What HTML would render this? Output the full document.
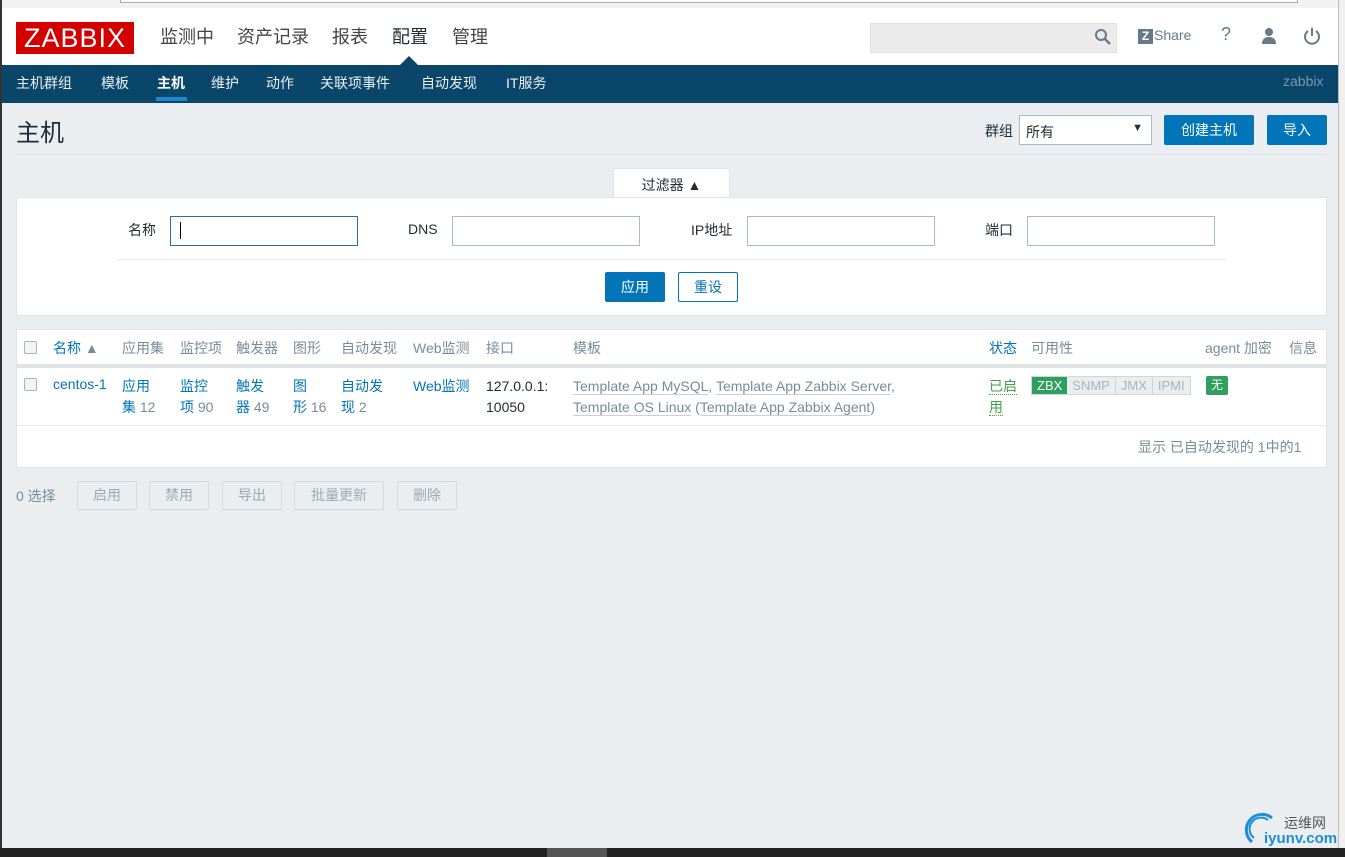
<!DOCTYPE html>
<html><head><meta charset="utf-8"><style>
*{margin:0;padding:0;box-sizing:border-box}
body{width:1345px;height:857px;overflow:hidden;background:#fff;font-family:"Liberation Sans","Noto Sans CJK SC",sans-serif;font-size:14px;color:#1f2c33;position:relative}
.a{position:absolute;white-space:nowrap}
#win{position:absolute;left:2px;top:0;width:1336px;height:848px;background:#ebeef0;overflow:hidden}
.hdr{position:absolute;left:0;top:8px;width:100%;height:57px;background:#fff}
.nav{position:absolute;left:0;top:65px;width:100%;height:38px;background:#0a466a}
.nav span{position:absolute;top:8px;color:#fff;font-size:14px;opacity:.92}
.top span{position:absolute;top:15px;font-size:18px;color:#444}
.box{position:absolute;background:#fff;border:1px solid #dfe4e7}
input{position:absolute;height:30px;border:1px solid #acbbc2;background:#fff}
.btn{position:absolute;height:30px;border-radius:2px;background:#0275b8;color:#fff;font-size:14px;text-align:center;line-height:30px}
.dis{position:absolute;top:481px;height:29px;border:1px solid #d5dadd;background:#ebeef0;color:#a0a9ae;border-radius:2px;text-align:center;line-height:27px}
.th{position:absolute;top:338px;color:#768d99}
.lk{color:#0275b8}
.tp{color:#768d99;border-bottom:1px solid #c8d1d6}
.cb{position:absolute;width:13px;height:13px;border:1px solid #aab3b8;border-radius:2px;background:#f4f4f4}
</style></head><body>
<div style="position:absolute;left:0;top:0;width:2px;height:848px;background:#333"></div>
<div style="position:absolute;left:0;top:848px;width:1345px;height:9px;background:#222"></div>
<div style="position:absolute;left:547px;top:848px;width:60px;height:9px;background:#555"></div>
<div style="position:absolute;left:1338px;top:0;width:7px;height:848px;background:#f0f0f0;border-left:1px solid #bbb"></div>
<div id="win">
<div style="position:absolute;left:0;top:0;width:100%;height:8px;background:#f2f2f2"></div>
<div style="position:absolute;left:118px;top:0;width:1178px;height:3px;border:1px solid #aaa;border-top:none;background:#fff"></div>
<div class="hdr top">
<div class="a" style="left:14px;top:14px;width:118px;height:32px;background:#d40000;color:#fff;font-size:27px;line-height:32px;text-align:center;letter-spacing:1px">ZABBIX</div>
<span style="left:158px">监测中</span><span style="left:235px">资产记录</span><span style="left:330px">报表</span><span style="left:390px;color:#1f2c33">配置</span><span style="left:450px">管理</span>
<div class="a" style="left:398px;top:48px;width:0;height:0;border:9px solid transparent;border-bottom-color:#0a466a;border-top:none"></div>
<div class="a" style="left:868px;top:15px;width:247px;height:30px;background:#ebebeb;border:1px solid #e0e0e0"></div>
<svg class="a" style="left:1092px;top:20px" width="18" height="18" viewBox="0 0 18 18"><circle cx="7" cy="7" r="5" fill="none" stroke="#687a85" stroke-width="2"/><path d="M11 11l5 5" stroke="#687a85" stroke-width="2.5"/></svg>
<div class="a" style="left:1136px;top:21px;width:15px;height:15px;background:#687a85;color:#fff;font-size:12px;font-weight:bold;text-align:center;line-height:15px">Z</div>
<span style="left:1152px;top:19px;font-size:14px;color:#687a85">Share</span>
<span style="left:1219px;top:16px;font-size:18px;color:#687a85">?</span>
<svg class="a" style="left:1258px;top:19px" width="18" height="18" viewBox="0 0 18 18"><circle cx="9" cy="5" r="4" fill="#687a85"/><path d="M2 17c0-5 3-7 7-7s7 2 7 7z" fill="#687a85"/></svg>
<svg class="a" style="left:1301px;top:19px" width="18" height="18" viewBox="0 0 18 18"><path d="M5 4a7 7 0 1 0 8 0" fill="none" stroke="#687a85" stroke-width="2"/><path d="M9 1v8" stroke="#687a85" stroke-width="2"/></svg>
</div>
<div class="nav">
<span style="left:14px">主机群组</span><span style="left:99px">模板</span><span style="left:155px;font-weight:bold;opacity:1">主机</span><span style="left:209px">维护</span><span style="left:264px">动作</span><span style="left:318px">关联项事件</span><span style="left:419px">自动发现</span><span style="left:504px">IT服务</span>
<div class="a" style="left:154px;top:32px;width:31px;height:4px;background:#1e87d0"></div>
<span style="left:1281px;color:#7a99ad;opacity:1">zabbix</span>
</div>
<div class="a" style="left:14px;top:113px;font-size:24px;color:#1f2c33">主机</div>
<div class="a" style="left:14px;top:154px;width:1311px;height:1px;background:#dde2e5"></div>
<div class="a" style="left:983px;top:121px;font-size:14px">群组</div>
<div class="a" style="left:1017px;top:115px;width:133px;height:30px;background:#fff;border:1px solid #acbbc2;padding:6px 0 0 6px">所有<span style="position:absolute;right:8px;top:6px;font-size:11px">▼</span></div>
<div class="btn" style="left:1162px;top:115px;width:90px">创建主机</div>
<div class="btn" style="left:1265px;top:115px;width:60px">导入</div>
<div class="a" style="left:611px;top:168px;width:117px;height:31px;background:#fff;border:1px solid #dfe4e7;border-bottom:none;text-align:center;padding-top:6px">过滤器 ▲</div>
<div class="box" style="left:14px;top:197px;width:1311px;height:119px"></div>
<div class="a" style="left:126px;top:220px">名称</div>
<input style="left:168px;top:216px;width:188px;border-color:#2c6e9b">
<div class="a" style="left:178px;top:222px;width:1px;height:17px;background:#000"></div>
<div class="a" style="left:406px;top:221px">DNS</div>
<input style="left:450px;top:216px;width:188px">
<div class="a" style="left:689px;top:220px">IP地址</div>
<input style="left:745px;top:216px;width:188px">
<div class="a" style="left:983px;top:220px">端口</div>
<input style="left:1025px;top:216px;width:188px">
<div class="a" style="left:114px;top:259px;width:1111px;height:1px;background:#e6eaec"></div>
<div class="btn" style="left:603px;top:272px;width:60px">应用</div>
<div class="btn" style="left:676px;top:272px;width:60px;background:#fff;color:#0275b8;border:1px solid #0275b8;line-height:28px">重设</div>
<div class="box" style="left:14px;top:329px;width:1311px;height:139px"></div>
<div class="a" style="left:15px;top:364px;width:1309px;height:4px;background:#dfe4e7"></div>
<div class="a" style="left:15px;top:425px;width:1309px;height:1px;background:#e6eaec"></div>
<div class="cb" style="left:22px;top:341px"></div>
<div class="th lk" style="left:51px">名称 <span style="color:#768d99">▲</span></div>
<div class="th" style="left:120px">应用集</div><div class="th" style="left:178px">监控项</div><div class="th" style="left:234px">触发器</div><div class="th" style="left:291px">图形</div><div class="th" style="left:339px">自动发现</div><div class="th" style="left:411px">Web监测</div><div class="th" style="left:484px">接口</div><div class="th" style="left:571px">模板</div><div class="th lk" style="left:987px">状态</div><div class="th" style="left:1029px">可用性</div><div class="th" style="left:1203px">agent 加密</div><div class="th" style="left:1287px">信息</div>
<div class="cb" style="left:22px;top:378px"></div>
<div class="a lk" style="left:51px;top:376px">centos-1</div>
<div class="a lk" style="left:120px;top:376px;line-height:21px">应用<br>集 <span style="color:#768d99">12</span></div>
<div class="a lk" style="left:178px;top:376px;line-height:21px">监控<br>项 <span style="color:#768d99">90</span></div>
<div class="a lk" style="left:234px;top:376px;line-height:21px">触发<br>器 <span style="color:#768d99">49</span></div>
<div class="a lk" style="left:291px;top:376px;line-height:21px">图<br>形 <span style="color:#768d99">16</span></div>
<div class="a lk" style="left:339px;top:376px;line-height:21px">自动发<br>现 <span style="color:#768d99">2</span></div>
<div class="a lk" style="left:411px;top:376px">Web监测</div>
<div class="a" style="left:484px;top:376px;line-height:21px">127.0.0.1:<br>10050</div>
<div class="a" style="left:571px;top:376px;line-height:21px;color:#768d99"><span class="tp">Template App MySQL</span>, <span class="tp">Template App Zabbix Server</span>,<br><span class="tp">Template OS Linux</span> (<span class="tp">Template App Zabbix Agent</span>)</div>
<div class="a" style="left:987px;top:376px;line-height:21px;color:#429e47"><span style="border-bottom:1px dotted #429e47">已启</span><br><span style="border-bottom:1px dotted #429e47">用</span></div>
<div class="a" style="left:1029px;top:376px;height:19px;border:1px solid #cfd7db;background:#ebeef0;font-size:13px;line-height:17px;color:#a8b4ba;display:flex">
<span style="background:#2f9f5e;color:#fff;padding:0 5px">ZBX</span><span style="padding:0 5px;border-right:1px solid #cfd7db">SNMP</span><span style="padding:0 5px;border-right:1px solid #cfd7db">JMX</span><span style="padding:0 5px">IPMI</span></div>
<div class="a" style="left:1204px;top:376px;width:22px;height:19px;background:#2f9f5e;color:#fff;font-size:12px;text-align:center;line-height:19px;border-radius:2px">无</div>
<div class="a" style="left:1136px;top:437px;color:#768d99">显示 已自动发现的 1中的1</div>
<div class="a" style="left:14px;top:486px;color:#768d99">0 选择</div>
<div class="dis" style="left:75px;width:60px">启用</div>
<div class="dis" style="left:147px;width:60px">禁用</div>
<div class="dis" style="left:220px;width:60px">导出</div>
<div class="dis" style="left:292px;width:90px">批量更新</div>
<div class="dis" style="left:395px;width:60px">删除</div>
<svg class="a" style="left:1240px;top:808px" width="40" height="40" viewBox="0 0 40 40"><path d="M30 10A14 14 0 1 0 10 34" fill="none" stroke="#1a8fd8" stroke-width="3"/><path d="M26 12A10 10 0 1 0 12 30" fill="none" stroke="#1a8fd8" stroke-width="2"/></svg>
<div class="a" style="left:1282px;top:813px;font-size:14px;color:#555">运维网</div>
<div class="a" style="left:1262px;top:830px;font-size:15px;color:#1a8fd8;font-weight:bold">iyunv.com</div>
</div>
</body></html>
